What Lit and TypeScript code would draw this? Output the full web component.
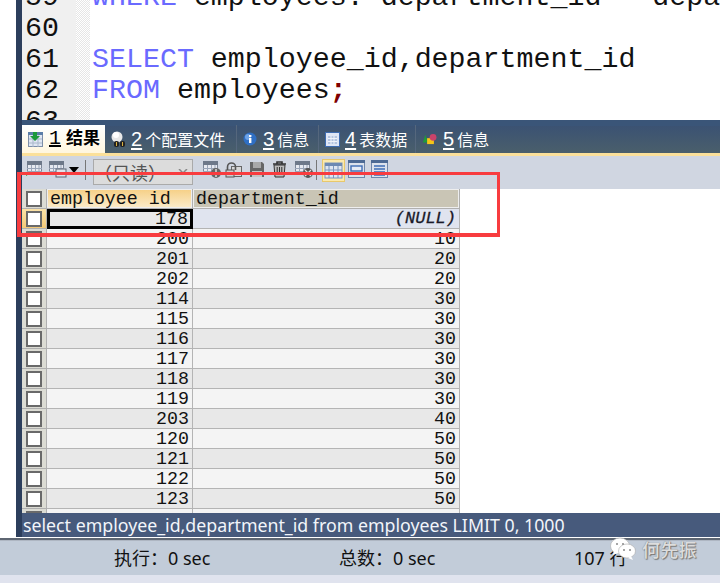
import { LitElement, html, css, svg } from "lit";
import { customElement } from "lit/decorators.js";

const ROWS: [string, string][] = [
  ["178", "(NULL)"], ["200", "10"], ["201", "20"], ["202", "20"], ["114", "30"], ["115", "30"],
  ["116", "30"], ["117", "30"], ["118", "30"], ["119", "30"], ["203", "40"], ["120", "50"],
  ["121", "50"], ["122", "50"], ["123", "50"], ["", ""],
];

const gridIcon = (body: unknown) => html`<svg class="ic" width="20" height="20" viewBox="0 0 20 20">${body}</svg>`;
const table = svg`<rect x="1.5" y="2.5" width="14" height="13" fill="#e6e9f0" stroke="#7d8798"/><rect x="1" y="2" width="15" height="4" fill="#6d7889"/><path d="M1 9.5h15M1 12.5h15M5.5 6v10M9.5 6v10M13 6v10" stroke="#9aa5b8"/>`;

const TB = [
  gridIcon(svg`${table}<path d="M0 14l3 1-3 2z" fill="#2a9a3a"/>`),
  gridIcon(svg`${table}<rect x="8" y="10" width="10" height="8" fill="#dfe3ea" stroke="#5d6675"/><path d="M5 16h4v-3z" fill="#2a8a3a"/>`),
];
const TB2 = [
  gridIcon(svg`${table}<circle cx="14" cy="14" r="5" fill="#666"/><path d="M14 10v8M10 14h8" stroke="#ddd" stroke-width="1.5"/>`),
  gridIcon(svg`<rect x="6.5" y="7.5" width="10" height="10" fill="#d8d8d8" stroke="#666"/><path d="M2.5 16V8a4 4 0 0 1 8 0v3" fill="none" stroke="#555" stroke-width="1.6"/><rect x="1" y="11" width="8" height="7" fill="#cfcfcf" stroke="#555"/>`),
  gridIcon(svg`<path d="M2 3h12l2 2v13H2z" fill="#666"/><rect x="5" y="3" width="8" height="6" fill="#a8a8a8"/><rect x="4" y="12" width="10" height="6" fill="#c4c4c4"/>`),
  gridIcon(svg`<path d="M2 5h13M6 5V3h5v2" fill="none" stroke="#333" stroke-width="1.6"/><path d="M3 6l1 12h9l1-12z" fill="#bbb" stroke="#333"/><path d="M6.2 8v8M8.5 8v8M10.8 8v8" stroke="#333"/>`),
  gridIcon(svg`${table}<circle cx="14" cy="14" r="5" fill="#555"/><path d="M11 11l6 6M17 11l-6 6" stroke="#ddd" stroke-width="1.3"/>`),
];

@customElement("app-root")
export class AppRoot extends LitElement {
  static styles = css`
    :host { display: flex; flex-direction: column; width: 720px; height: 583px; overflow: hidden; position: relative; background: #fff; font-family: "Liberation Sans", "Noto Sans CJK SC", sans-serif; }
    .main { height: 537px; display: flex; flex: none; }
    .blank { width: 16px; flex: none; background: #fff; }
    .side { width: 6px; flex: none; background: #2c3e5c; }
    .pane { flex: 1; min-width: 0; display: flex; flex-direction: column; }
    .editor { height: 120px; flex: none; overflow: hidden; display: flex; background: #fff; font: 28.3px/31px "Liberation Mono", monospace; color: #111; }
    .gutter { width: 54px; flex: none; background: #f0f0f0; padding-left: 3px; box-sizing: border-box; }
    .dots { width: 14px; flex: none; background: repeating-conic-gradient(#e6e6e6 0 25%, #fff 0 50%) 0 0 / 2px 2px; }
    .code { flex: 1; padding-left: 2px; overflow: hidden; }
    .shift { margin-top: -18px; }
    .l { height: 31px; white-space: pre; }
    .kw { color: #6a6aff; }
    .semi { color: #800000; font-weight: bold; }
    .tabs { height: 33px; flex: none; box-sizing: border-box; padding-top: 5px; background: linear-gradient(#3a5578 0 6px, #3b5273 6px, #4a5f6b 100%); display: flex; color: #fff; font: 16px/1 "Liberation Sans", "Noto Sans CJK SC", sans-serif; }
    .tab { display: flex; align-items: center; gap: 2px; padding-left: 6px; box-sizing: border-box; border-right: 1px solid #55677d; white-space: nowrap; }
    .tab u { font-size: 20px; font-weight: 300; text-underline-offset: 2px; margin: 0 3px 0 2px; }
    .tab.on { background: linear-gradient(#fff, #fff6de); color: #000; font-weight: bold; font-size: 17px; border: none; }
    .tab.on b { font-family: "Liberation Mono", monospace; font-weight: normal; text-decoration: underline; font-size: 20px; margin: 0 5px 0 3px; }
    .strip { height: 3px; flex: none; background: #fbe09a; }
    .tools { height: 33px; flex: none; background: #d0d6e1; display: flex; align-items: flex-start; box-sizing: border-box; padding: 3px 0 0 4px; }
    .ic { display: block; flex: none; }
    .icons { display: flex; gap: 2px; align-items: center; }
    .caret { width: 0; height: 0; border: 5.5px solid transparent; border-top: 6px solid #000; border-bottom: 0; margin: 8px 6px 0 1px; }
    .sep { width: 1px; height: 20px; background: #777; margin: 1px 7px 0 0; flex: none; }
    .drop { width: 100px; height: 26px; box-sizing: border-box; border: 1px solid #aaa; background: #dcdcdc; color: #555; font-size: 18px; display: flex; align-items: center; justify-content: space-between; padding: 0 4px 0 0; margin-right: 9px; white-space: nowrap; }
    .chev { width: 10px; height: 6px; color: #888; }
    .sel { width: 23px; height: 23px; background: #fbe9ad; border: 1px solid #e8c86c; box-sizing: border-box; display: flex; align-items: center; justify-content: center; margin-right: 1px; }
    .grid { flex: 1; min-height: 0; overflow: hidden; background: #fff; display: grid; grid-template-columns: 25px 146px 267px; grid-auto-rows: 20px; align-content: start; font: 18.3px/18px "Liberation Mono", monospace; color: #111; justify-content: start; }
    .box { box-sizing: border-box; background: #dcdcd4; border: 1px solid #b0b0b0; border-width: 0 1px 1px 0; display: flex; align-items: center; justify-content: center; }
    .box i { width: 12px; height: 12px; box-sizing: content-box; display: block; background: #fff; border: 2px solid #6a6a6a; }
    .box.cur { background: linear-gradient(#fbe3a8, #f3c877); }
    .hd { box-sizing: border-box; padding-left: 3px; border: 1px solid #b0b0b0; border-width: 0 1px 1px 0; display: flex; align-items: center; box-shadow: inset 0 0 0 1px #eee; }
    .hd.a { background: linear-gradient(#f6cf85, #fbeccb); }
    .hd.b { background: #c9c5b5; }
    .c { box-sizing: border-box; text-align: right; padding: 1px 3px 0 0; border: 1px solid #b4b4b4; border-width: 0 1px 1px 0; }
    .odd { background: #e8e8e8; }
    .even { background: #f4f4f4; }
    .first { background: #e0e4ef; }
    .nul { font-style: italic; font-size: 17px; padding-right: 3px; color: #1a1a2a; -webkit-text-stroke: 0.3px #1a1a2a; }
    .focus { outline: 3px solid #000; outline-offset: -3px; background: #e8e8e8; padding-right: 4px; }
    .sql { height: 24px; flex: none; background: #475a7c; color: #f2f5fa; font: 17.75px/24px "Noto Sans", "Noto Sans CJK SC", sans-serif; white-space: nowrap; padding-left: 1px; }
    .line { height: 4px; flex: none; background: linear-gradient(#fff 0 1px, #5e6672 1px 3px, #aeb6c2 3px); }
    .status { height: 34px; flex: none; background: #c2ccd9; color: #111; font: 18px/35px "Noto Sans", "Noto Sans CJK SC", sans-serif; position: relative; display: flex; white-space: nowrap; }
    .status span:nth-child(1) { margin-left: 114px; width: 225px; }
    .status span:nth-child(2) { width: 235px; }
    .foot { flex: 1; background: #e0e3ee; }
    .frame { position: absolute; left: 17px; top: 172px; width: 483px; height: 65px; box-sizing: border-box; border: 4px solid #f83c3f; border-width: 3px 3px 4px 4px; pointer-events: none; }
    .mark { position: absolute; left: 609px; top: 536px; display: flex; align-items: center; gap: 5px; color: #ddd; font-size: 18px; font-weight: 500; text-shadow: 0 0 1px #777, 1px 1px 1px #777; letter-spacing: 0.3px; }
  `;

  render() {
    const sel = (b: unknown) => html`<div class="sel"><svg width="19" height="19" viewBox="0 0 19 19">${b}</svg></div>`;
    const view = (b: unknown) => html`<svg class="ic" width="23" height="22" viewBox="0 0 23 22">${b}</svg>`;
    return html`
      <div class="main">
        <div class="blank"></div>
        <div class="side"></div>
        <div class="pane">
          <div class="editor">
            <div class="gutter"><div class="shift">${["59", "60", "61", "62", "63"].map((n) => html`<div class="l">${n}</div>`)}</div></div>
            <div class="dots"></div>
            <div class="code"><div class="shift">
              <div class="l"><span class="kw">WHERE</span> employees.\`department_id\`=\`depal</div>
              <div class="l"></div>
              <div class="l"><span class="kw">SELECT</span> employee_id,department_id</div>
              <div class="l"><span class="kw">FROM</span> employees<span class="semi">;</span></div>
            </div></div>
          </div>
          <div class="tabs">
            <div class="tab on" style="width:83px">
              <svg class="ic" width="16" height="20" viewBox="0 0 16 20"><rect x=".5" y="3.5" width="14" height="14" fill="#dfe6f2" stroke="#7d8ea8"/><rect x="0" y="3" width="15" height="3" fill="#5c7ea8"/><path d="M1 10h13M1 14h13M5 6v12M10 6v12" stroke="#a9b7cc"/><path d="M5 3h4v4h3l-5 5-5-5h3z" fill="#1d9a3a"/></svg>
              <span><b>1</b>结果</span>
            </div>
            <div class="tab" style="width:132px">
              <svg class="ic" width="16" height="20" viewBox="0 0 16 20"><circle cx="6" cy="8" r="5.5" fill="#e8e8e8"/><circle cx="5" cy="6" r="3" fill="#fff"/><rect x="3" y="12" width="5" height="6" rx="2" fill="#222"/><rect x="9" y="12" width="5" height="6" rx="2" fill="#222"/><path d="M5.5 13v4M11.5 13v4" stroke="#d8b040"/></svg>
              <span><u>2</u>个配置文件</span>
            </div>
            <div class="tab" style="width:82px">
              <svg class="ic" width="16" height="20" viewBox="0 0 16 20"><circle cx="7" cy="10" r="6.5" fill="#2f6fc4"/><circle cx="5" cy="8" r="3" fill="#6ea3e6"/><rect x="6" y="9" width="2.4" height="5" fill="#fff"/><rect x="6" y="6" width="2.4" height="2" fill="#fff"/></svg>
              <span><u>3</u>信息</span>
            </div>
            <div class="tab" style="width:97px">
              <svg class="ic" width="16" height="20" viewBox="0 0 16 20"><rect x=".5" y="3.5" width="14" height="14" fill="#dfe6f5" stroke="#3d6bb0"/><path d="M3 7h9v8H3z" fill="#b3c4e0"/><path d="M3 9.5h9M3 12.5h9M6 7v8M9 7v8" stroke="#eef2fa"/></svg>
              <span><u>4</u>表数据</span>
            </div>
            <div class="tab" style="flex:1;border:none">
              <svg class="ic" width="17" height="20" viewBox="0 0 20 20"><path d="M1 14l3-9 3 9z" fill="#1f9a3a"/><rect x="6" y="9" width="8" height="7" fill="#f5c518"/><circle cx="13" cy="8" r="4" fill="#c9436a"/></svg>
              <span><u>5</u>信息</span>
            </div>
          </div>
          <div class="strip"></div>
          <div class="tools">
            <div class="icons">${TB}</div>
            <div class="caret"></div>
            <div class="sep"></div>
            <div class="drop"><span>（只读）</span><svg class="chev" viewBox="0 0 10 6"><path d="M1 0l4 4 4-4" fill="none" stroke="currentColor" stroke-width="1.5"/></svg></div>
            <div class="icons" style="gap:3px">${TB2}</div>
            <div class="sep" style="margin-left:2px;margin-right:5px"></div>
            ${sel(svg`<rect x="1" y="2" width="17" height="15" fill="#dfe6f2" stroke="#7b96bd"/><rect x="1" y="2" width="17" height="3" fill="#6d89b3"/><path d="M1 9h17M1 13h17M5 5v12M9.5 5v12M14 5v12" stroke="#7b96bd"/>`)}
            <div class="icons" style="gap:0">
              ${view(svg`<rect x="2.5" y="1.5" width="16" height="17" fill="#dce2ec" stroke="#6f86aa"/><rect x="2" y="1" width="17" height="3" fill="#4d6a94"/><rect x="5" y="7" width="11" height="5" fill="#e6ecf6" stroke="#3e6db5" stroke-width="1.4"/>`)}
              ${view(svg`<rect x="2.5" y="1.5" width="16" height="17" fill="#dce2ec" stroke="#6f86aa"/><rect x="2" y="1" width="17" height="3" fill="#4d6a94"/><path d="M5 7h11M5 10h11M5 13h11M5 16h11" stroke="#3e6db5" stroke-width="1.4"/>`)}
            </div>
          </div>
          <div class="grid">
            <div class="box"><i></i></div>
            <div class="hd a">employee id</div>
            <div class="hd b">department_id</div>
            ${ROWS.map(([id, dep], i) => {
              const tone = i === 0 ? "first" : i % 2 ? "even" : "odd";
              return html`
                <div class="box ${i === 0 ? "cur" : ""}"><i></i></div>
                <div class="c ${i === 0 ? "focus" : i % 2 ? "even" : "odd"}">${id}</div>
                <div class="c ${tone} ${dep === "(NULL)" ? "nul" : ""}">${dep}</div>`;
            })}
          </div>
          <div class="sql">select employee_id,department_id from employees LIMIT 0, 1000</div>
        </div>
      </div>
      <div class="line"></div>
      <div class="status"><span>执行：0 sec</span><span>总数：0 sec</span><span>107 行</span></div>
      <div class="foot"></div>
      <div class="frame"></div>
      <div class="mark">
        <svg width="28" height="26" viewBox="0 0 28 26"><ellipse cx="11" cy="10" rx="9.5" ry="8" fill="#fff" stroke="#aaa" stroke-width=".6"/><path d="M5 15l-1 4 5-2z" fill="#fff"/><ellipse cx="18" cy="15" rx="8.5" ry="7" fill="#fff" stroke="#aaa" stroke-width=".6"/><path d="M22 20l2 4-5-2z" fill="#fff"/><circle cx="8" cy="8" r="1" fill="#888"/><circle cx="14" cy="8" r="1" fill="#888"/><circle cx="15" cy="14" r="1" fill="#888"/><circle cx="21" cy="14" r="1" fill="#888"/></svg>
        <span>何先振</span>
      </div>
    `;
  }
}
